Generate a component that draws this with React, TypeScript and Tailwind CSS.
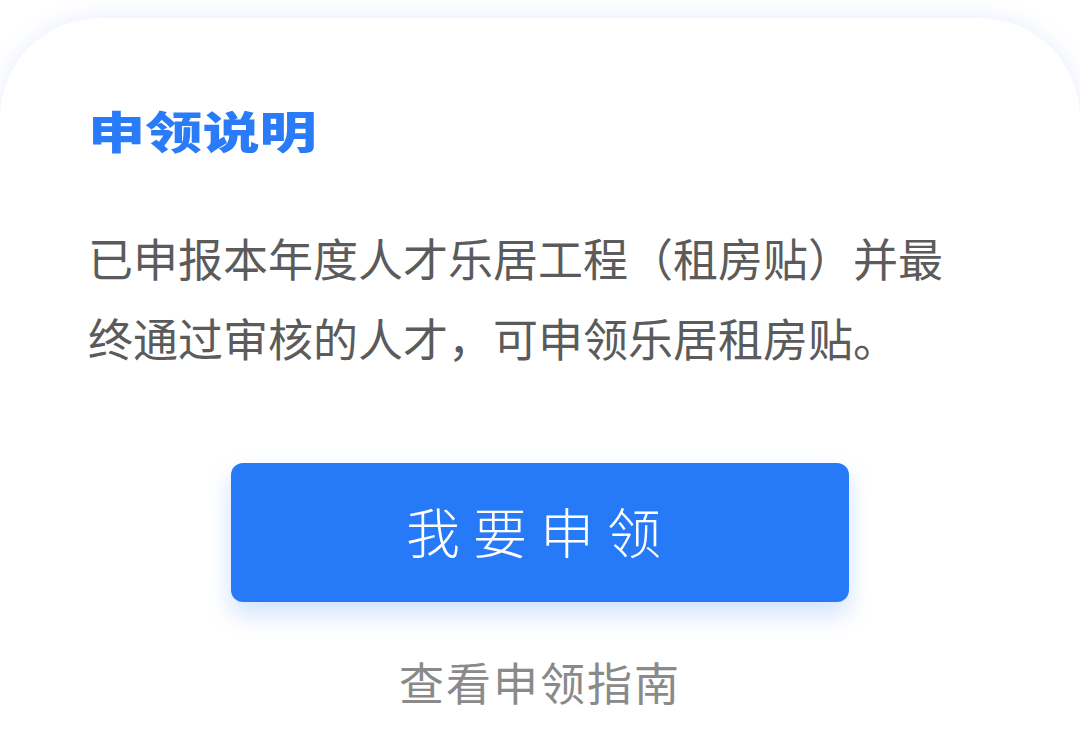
import React from 'react';

const App: React.FC = () => {
    return (
        <div className="w-[1080px] h-[745px] overflow-hidden bg-white pt-[18px]" style={{ fontFamily: '"Noto Sans CJK SC", "Noto Sans", sans-serif' }}>
            <div className="h-[800px] bg-white rounded-t-[100px] shadow-[0_0_22px_rgba(70,120,240,0.14)] px-[88px] pt-[90px]">
                {/* Title */}
                <h2 className="h-[44px] leading-[44px] text-[44px] font-black text-[#2a7bf7]">
                    <span className="inline-block origin-left scale-x-[1.3]">申领说明</span>
                </h2>

                {/* Description */}
                <p className="mt-[66px] w-[870px] text-[45px] leading-[80px] text-[#5b5b5b]">
                    已申报本年度人才乐居工程（租房贴）并最终通过审核的人才，可申领乐居租房贴。
                </p>

                {/* Actions */}
                <div className="flex flex-col items-center">
                    <button className="mt-[85px] w-[618px] h-[139px] rounded-[12px] bg-[#267af8] text-white text-[54px] font-light tracking-[13px] pb-[4px] shadow-[0_12px_24px_rgba(38,122,248,0.22)]">
                        我要申领
                    </button>
                    <a className="mt-[57px] h-[45px] leading-[45px] text-[45px] tracking-[2px] text-[#8a8a8a]">
                        查看申领指南
                    </a>
                </div>
            </div>
        </div>
    );
};

export default App;
